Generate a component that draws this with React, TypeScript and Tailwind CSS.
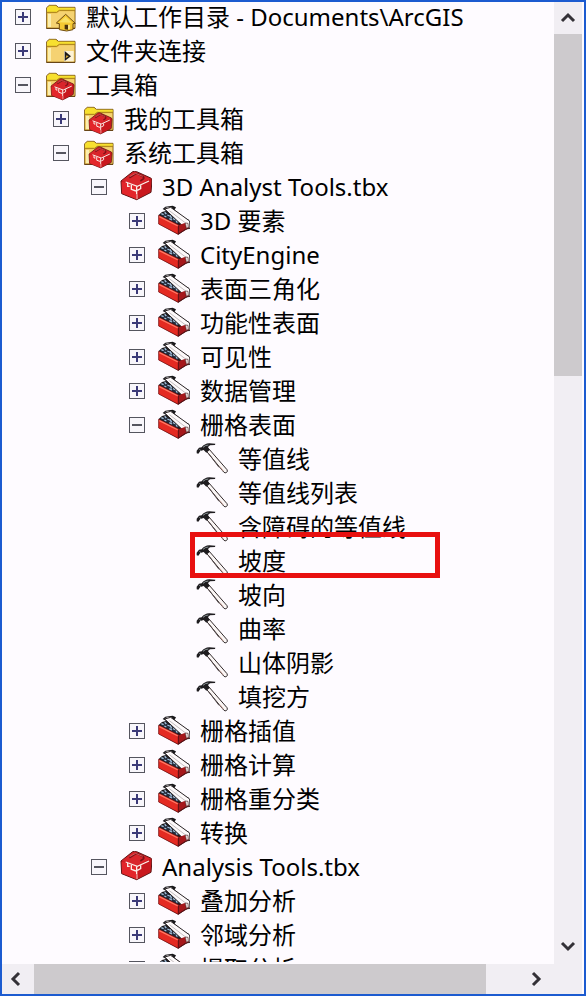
import { useState } from "react";
import type { ReactNode } from "react";

type Kind = "home" | "link" | "boxFolder" | "toolbox" | "toolset" | "tool";

interface Item {
  label: string;
  kind: Kind;
  open?: boolean;
  marked?: boolean;
  children?: Item[];
}

const set = (label: string): Item => ({ label, kind: "toolset", children: [] });
const tool = (label: string, marked = false): Item => ({ label, kind: "tool", marked });

const catalog: Item[] = [
  { label: "默认工作目录 - Documents\\ArcGIS", kind: "home", children: [] },
  { label: "文件夹连接", kind: "link", children: [] },
  {
    label: "工具箱",
    kind: "boxFolder",
    open: true,
    children: [
      { label: "我的工具箱", kind: "boxFolder", children: [] },
      {
        label: "系统工具箱",
        kind: "boxFolder",
        open: true,
        children: [
          {
            label: "3D Analyst Tools.tbx",
            kind: "toolbox",
            open: true,
            children: [
              set("3D 要素"),
              set("CityEngine"),
              set("表面三角化"),
              set("功能性表面"),
              set("可见性"),
              set("数据管理"),
              {
                label: "栅格表面",
                kind: "toolset",
                open: true,
                children: [
                  tool("等值线"),
                  tool("等值线列表"),
                  tool("含障碍的等值线"),
                  tool("坡度", true),
                  tool("坡向"),
                  tool("曲率"),
                  tool("山体阴影"),
                  tool("填挖方"),
                ],
              },
              set("栅格插值"),
              set("栅格计算"),
              set("栅格重分类"),
              set("转换"),
            ],
          },
          {
            label: "Analysis Tools.tbx",
            kind: "toolbox",
            open: true,
            children: [set("叠加分析"), set("邻域分析"), set("提取分析")],
          },
        ],
      },
    ],
  },
];

function Folder({ children }: { children: ReactNode }) {
  return (
    <>
      <path d="M8 82V20l8-7h20l7 6h50v63z" fill="#e9b93a" stroke="#7d5a18" strokeWidth="3" />
      <path d="M9 32V21l8-7h18l7 6h50v8H46l-8 6H9z" fill="#f7e02f" />
      <path d="M8 34h30l8-6h47" fill="none" stroke="#a87d1c" strokeWidth="3" />
      <path d="M10 37h29l8-6h44v49H10z" fill="#f5d272" />
      <path d="M12 39h9v39h-9z" fill="#fbeeb0" />
      <path d="M7 82h86" stroke="#5f3d12" strokeWidth="3" />
      {children}
    </>
  );
}

function BoxShape() {
  return (
    <>
      <path d="M3 30L38 2q6-3 12 0l42 19q4 2 4 6l-3 37-43 22L5 68z" fill="#c81c20" stroke="#5c1212" strokeWidth="3" />
      <path d="M5 30L38 5q5-3 11 0l42 18-40 20z" fill="#d9252b" />
      <path d="M28 20l18-11q4-2 8 0l15 8q4 3 1 7l-9 6" fill="none" stroke="#7d1016" strokeWidth="5" />
      <path d="M29 17l18-10 21 9" fill="none" stroke="#f47a78" strokeWidth="2" />
      <path d="M5 32l46 13-1 40L6 67z" fill="#e3262b" />
      <path d="M51 45l42-20-3 38-40 22z" fill="#c9181e" />
      <path d="M17 33l35 13 35-16" fill="none" stroke="#fbeee8" strokeWidth="4" />
      <path d="M23 36v10h6M34 42v13l14 5M50 46v24M62 43v10l-10 5" fill="none" stroke="#fbeee8" strokeWidth="4" />
      <path d="M51 70v14" fill="none" stroke="#f6c9c3" strokeWidth="3" />
    </>
  );
}

function Icon({ kind }: { kind: Kind }) {
  return (
    <svg viewBox="0 0 96 96" className="size-8 shrink-0" aria-hidden="true">
      {kind === "home" && (
        <Folder>
          <path d="M37 66l28-26 29 27-7 1v18l-19 4-22-4V68z" fill="#f6c832" stroke="#6e4b12" strokeWidth="3" />
          <path d="M46 64l19-17 19 18z" fill="#fbe166" />
          <path d="M62 85V71h10v15z" fill="#4c300c" />
          <path d="M73 84V72h4v13z" fill="#fff1a6" />
        </Folder>
      )}
      {kind === "link" && (
        <Folder>
          <path d="M60 48h29v31H60z" fill="#fdf2d6" />
          <path d="M62 48v30l19-14z" fill="#1f1a18" />
          <path d="M65 70l9-6-7-3z" fill="#d7ab38" />
        </Folder>
      )}
      {kind === "boxFolder" && (
        <Folder>
          <g transform="translate(19 29) scale(0.74)">
            <BoxShape />
          </g>
        </Folder>
      )}
      {kind === "toolbox" && <BoxShape />}
      {kind === "toolset" && (
        <>
          <path d="M2 30l10-9 20-5 60 28 3 22-34 23L2 57z" fill="#1d1a1c" />
          <path d="M14 12l8-7 22-3 10 5-4 7 12 10-20 4z" fill="#18171a" />
          <path d="M20 10l10-4 13 2-8 6z" fill="#e5dfe2" />
          <path d="M6 29l16-7 44 26-7 10z" fill="#232a38" />
          <path d="M10 26l7 3M20 22l5 5M28 30l7 3M36 31l5 9M45 41l7 3M19 33l6 3M54 46l4 7M34 41l8 4" stroke="#a3c0dc" strokeWidth="4" />
          <path d="M20 12l18-5 57 41 1 22-12 2z" fill="#fdf9fa" stroke="#2b2527" strokeWidth="3" />
          <path d="M34 17l50 38" stroke="#a8a0a3" strokeWidth="2" />
          <path d="M62 61l18-7 8 14-27 18z" fill="#a5171b" />
          <path d="M82 54l8 1 1 12-6 3z" fill="#f6ecec" stroke="#4a2123" strokeWidth="2" />
          <path d="M2 31l60 29-1 28L2 57z" fill="#e42a22" stroke="#861417" strokeWidth="2" />
          <path d="M4 35l56 28" stroke="#ff7a64" strokeWidth="4" />
          <path d="M61 62v25l33-20" fill="none" stroke="#611013" strokeWidth="3" />
        </>
      )}
      {kind === "tool" && (
        <>
          <path d="M30 23l8-6 55 63q3 5-1 8-5 4-9-1z" fill="#fbf6f5" stroke="#332b2c" strokeWidth="3" />
          <path d="M38 32l31 41" stroke="#554b4c" strokeWidth="3" />
          <path d="M72 71l10 13" stroke="#c9a39b" strokeWidth="3" />
          <path d="M2 23l7-9 8-1q8-11 23-12l18 1-1 4-15 1-6 5 5 9-10 8-8-8-10 3-6 8-5-1z" fill="#1e1c1f" />
          <path d="M21 13q7-7 16-7M10 19l5 4" stroke="#8b9496" strokeWidth="3" fill="none" />
        </>
      )}
    </svg>
  );
}

const indents = ["pl-[13px]", "pl-[51px]", "pl-[89px]", "pl-[127px]", "pl-[165px]"];

function Node({ item, level }: { item: Item; level: number }) {
  const [open, setOpen] = useState(Boolean(item.open));
  return (
    <li role="treeitem" aria-label={item.label} aria-expanded={item.children ? open : undefined}>
      <div className={`relative flex h-[34px] items-center ${indents[level]}`}>
        {item.children ? (
          <button
            type="button"
            aria-label={`${open ? "折叠" : "展开"} ${item.label}`}
            onClick={() => setOpen(!open)}
            className="flex size-4 shrink-0 items-center justify-center border border-[#55555f] bg-[#f8f6fb]"
          >
            <svg viewBox="0 0 10 10" className="size-2.5" fill="none" strokeWidth="2" aria-hidden="true">
              <path d="M0 5h10" stroke={open ? "#55555f" : "#3b3a78"} />
              {!open && <path d="M5 0v10" stroke="#3b3a78" />}
            </svg>
          </button>
        ) : (
          <span className="w-4 shrink-0" />
        )}
        <span className="ml-[13px] flex items-center gap-2.5">
          <Icon kind={item.kind} />
          <span className="whitespace-nowrap">{item.label}</span>
        </span>
        {item.marked && (
          <span className="pointer-events-none absolute -top-3 bottom-0 left-[188px] w-[250px] border-[5px] border-[#e81010]" />
        )}
      </div>
      {open && item.children && item.children.length > 0 && (
        <ul role="group">
          {item.children.map((child) => (
            <Node key={child.label} item={child} level={level + 1} />
          ))}
        </ul>
      )}
    </li>
  );
}

function Arrow({ d, label, className }: { d: string; label: string; className: string }) {
  return (
    <button type="button" aria-label={label} className={`flex shrink-0 items-center justify-center ${className}`}>
      <svg viewBox="0 0 16 16" className="size-4" fill="none" stroke="#343137" strokeWidth="3" aria-hidden="true">
        <path d={d} />
      </svg>
    </button>
  );
}

export default function App() {
  return (
    <main className="flex h-screen flex-col overflow-hidden border-2 border-[#1c5bd0] bg-[#fefbff] font-['Noto_Sans','Noto_Sans_CJK_SC',sans-serif] text-2xl leading-7 text-black">
      <div className="flex min-h-0 flex-1">
        <div className="mb-0.5 min-w-0 flex-1 overflow-hidden">
          <ul role="tree" aria-label="目录" className="-mt-0.5">
            {catalog.map((item) => (
              <Node key={item.label} item={item} level={0} />
            ))}
          </ul>
        </div>
        <div className="mr-0.5 flex w-7 flex-col bg-[#f1eef3] pb-0.5">
          <Arrow d="M2 11l6-6 6 6" label="向上滚动" className="h-8" />
          <div className="h-[342px] bg-[#cdcacd]" />
          <div className="flex-1" />
          <Arrow d="M2 5l6 6 6-6" label="向下滚动" className="h-8" />
        </div>
      </div>
      <div className="mr-0.5 flex h-[30px] bg-[#f1eef3]">
        <Arrow d="M11 2L5 8l6 6" label="向左滚动" className="w-7" />
        <div className="ml-1 w-[452px] bg-[#cdcacd]" />
        <div className="flex-1" />
        <Arrow d="M5 2l6 6-6 6" label="向右滚动" className="w-8" />
        <div className="w-[30px]" />
      </div>
    </main>
  );
}
